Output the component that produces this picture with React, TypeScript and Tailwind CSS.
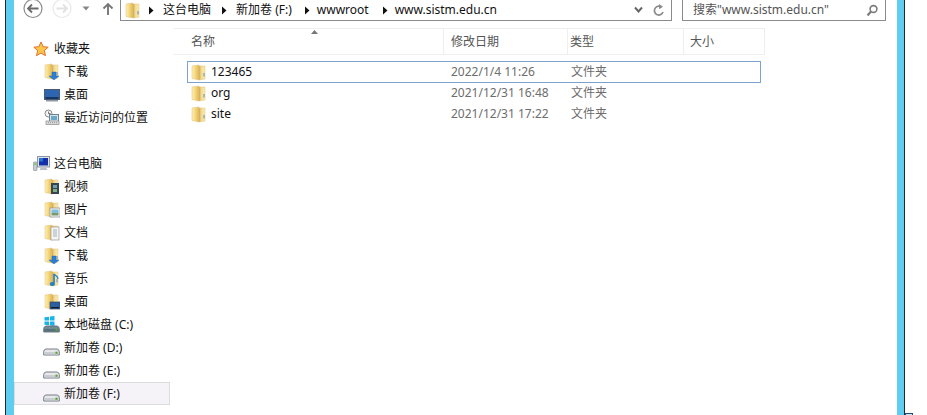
import React from "react";

function Folder({ overlay }: { overlay?: React.ReactNode }) {
  return (
    <svg width="16" height="17" viewBox="0 0 16 17" className="shrink-0">
      <defs>
        <linearGradient id="fg" x1="0" x2="1" y1="0" y2="0">
          <stop offset="0" stopColor="#fdf1b8" />
          <stop offset="0.5" stopColor="#f6d67c" />
          <stop offset="1" stopColor="#e0b552" />
        </linearGradient>
        <linearGradient id="fr" x1="0" x2="1" y1="0" y2="0">
          <stop offset="0" stopColor="#c9a24e" />
          <stop offset="0.35" stopColor="#f3d98e" />
          <stop offset="1" stopColor="#fbedb4" />
        </linearGradient>
      </defs>
      <path d="M1 2 L8 1 L8 16 L1 14.5 Z" fill="url(#fg)" stroke="#dcc07a" strokeWidth="0.5" />
      <path d="M8 2 L14 2 L14 15 L8 16 Z" fill="url(#fr)" stroke="#dcc07a" strokeWidth="0.5" />
      <rect x="12.4" y="9" width="1.2" height="3.5" fill="#7a9cc0" />
      {overlay}
    </svg>
  );
}

const ArrowDown = (
  <path d="M8 9 H12 V13 H15 L10 17 L5 13 H8 Z" fill="#2a7fd4" stroke="#1c5fa8" strokeWidth="0.4" />
);
const DeskOverlay = (
  <g>
    <rect x="6" y="9" width="10" height="7" fill="#2b5f9e" stroke="#33465e" strokeWidth="0.7" />
    <rect x="7" y="14" width="8" height="1.2" fill="#101a28" />
  </g>
);
const VideoOverlay = (
  <g>
    <rect x="7" y="5" width="8" height="11" fill="#36454f" />
    <rect x="9" y="7" width="4" height="3" fill="#6d9fb0" />
    <rect x="9" y="11" width="4" height="3" fill="#7fb08c" />
  </g>
);
const PicOverlay = (
  <g>
    <rect x="6" y="7" width="10" height="9" fill="#f3f3f3" stroke="#8c8c8c" strokeWidth="0.7" />
    <rect x="7.5" y="8.5" width="7" height="4" fill="#7fc0d8" />
    <rect x="7.5" y="12" width="7" height="2.5" fill="#7b9a6d" />
  </g>
);
const DocOverlay = (
  <g>
    <rect x="7" y="3" width="8" height="13" fill="#f5f5f5" stroke="#9c9c9c" strokeWidth="0.7" />
    <path d="M9 6 H13 M9 8 H13 M9 10 H13 M9 12 H13" stroke="#8ca0b4" strokeWidth="0.8" />
  </g>
);
const MusicOverlay = (
  <g>
    <path d="M10 4 V13" stroke="#1f7fc8" strokeWidth="1.6" />
    <path d="M10 4 C12 6 14 6 14 9" stroke="#1f7fc8" strokeWidth="1.2" fill="none" />
    <ellipse cx="8.4" cy="14" rx="2.6" ry="2" fill="#1f7fc8" />
  </g>
);

function Star() {
  return (
    <svg width="16" height="16" viewBox="0 0 16 16" className="shrink-0">
      <path
        d="M8 1 L10.1 5.7 L15.2 6.2 L11.3 9.6 L12.5 14.7 L8 12 L3.5 14.7 L4.7 9.6 L0.8 6.2 L5.9 5.7 Z"
        fill="#fbc44a"
        stroke="#e2712a"
        strokeWidth="1"
      />
    </svg>
  );
}

function Desktop() {
  return (
    <svg width="16" height="16" viewBox="0 0 16 16" className="shrink-0">
      <rect x="0.5" y="2.5" width="15" height="10" fill="#2d65b0" stroke="#4a5a70" />
      <rect x="1.5" y="10" width="13" height="2" fill="#16365f" />
      <rect x="2" y="13" width="12" height="1.5" fill="#8f9aa8" />
    </svg>
  );
}

function Recent() {
  return (
    <svg width="16" height="17" viewBox="0 0 16 17" className="shrink-0">
      <circle cx="4.5" cy="4.5" r="3.5" fill="#f4f4f4" stroke="#8a8a8a" />
      <path d="M4.5 2.5 V4.5 H6.5" stroke="#555" fill="none" strokeWidth="0.8" />
      <rect x="5.5" y="5.5" width="9" height="7" fill="#d6e6ee" stroke="#6f8090" />
      <rect x="7" y="7" width="6" height="4" fill="#6fa7c7" />
      <rect x="2" y="12" width="13" height="3.5" fill="#dcdcdc" stroke="#8a8a8a" strokeWidth="0.7" />
      <path d="M4 13.7 H13" stroke="#777" strokeWidth="0.7" strokeDasharray="1 1" />
    </svg>
  );
}

function Computer() {
  return (
    <svg width="17" height="16" viewBox="0 0 17 16" className="shrink-0">
      <rect x="0.5" y="6" width="3.5" height="8.5" rx="0.6" fill="#c8ccd0" stroke="#808890" strokeWidth="0.6" />
      <rect x="1.2" y="7" width="2" height="2" fill="#7fcf60" />
      <rect x="4.5" y="0.5" width="12" height="10.5" fill="#dfe3e8" stroke="#8a96a4" />
      <rect x="6" y="2" width="9" height="7.5" fill="#1631a8" />
      <rect x="6" y="2" width="4" height="3.5" fill="#2a74d8" />
      <path d="M8 11.5 H13 L14.5 14 H6.5 Z" fill="#b9bfc6" />
    </svg>
  );
}

function Drive({ win }: { win?: boolean }) {
  return (
    <svg width="17" height="17" viewBox="0 0 17 17" className="-ml-px shrink-0">
      {win && (
        <g fill="#17b4ea">
          <path d="M1.5 1.3 L6 0.7 V4.6 H1.5 Z" />
          <path d="M7 0.6 L11.5 0 V4.6 H7 Z" />
          <path d="M1.5 5.6 H6 V9.3 L1.5 8.8 Z" />
          <path d="M7 5.6 H11.5 V10 L7 9.4 Z" />
        </g>
      )}
      <path
        d="M0.7 16 V12.8 Q0.7 10.5 3 10 H14 Q16.3 10.5 16.3 12.8 V16 Z"
        fill={win ? "#6f8a94" : "#e6e8ea"}
        stroke="#67707a"
        strokeWidth="0.9"
      />
      <rect x="1.5" y="13" width="14" height="2.4" fill={win ? "#55707a" : "#c9ccd0"} />
      <rect x="12.5" y="12.6" width="2" height="2.2" fill="#58a82e" />
    </svg>
  );
}

function Item({
  icon,
  label,
  indent = true,
  selected,
}: {
  icon: React.ReactNode;
  label: string;
  indent?: boolean;
  selected?: boolean;
}) {
  return (
    <div
      className={
        "flex h-[23px] items-center border " +
        (selected ? "border-[#dcdcdc] bg-[#f6f3f8] " : "border-transparent ") +
        (indent ? "pl-[29px]" : "pl-[18px]")
      }
    >
      <span className={"flex shrink-0 items-center " + (indent ? "w-[20px]" : "w-[21px]")}>{icon}</span>
      <span className="whitespace-nowrap">{label}</span>
    </div>
  );
}

function Arrow() {
  return (
    <svg width="6" height="9" viewBox="0 0 6 9" className="shrink-0">
      <path d="M1 0.5 L5.5 4.5 L1 8.5 Z" fill="#111" />
    </svg>
  );
}

function Toolbar() {
  return (
    <div className="flex h-[21px] shrink-0 items-start">
      <div className="flex w-[106px] shrink-0 items-start">
        <svg width="106" height="19" viewBox="0 0 106 19" className="shrink-0">
          <circle cx="19" cy="8.5" r="9" fill="#fff" stroke="#8c8c8c" strokeWidth="1.2" />
          <path d="M24.5 8.5 H14 M18 4.5 L14 8.5 L18 12.5" stroke="#6b6b6b" strokeWidth="1.8" fill="none" />
          <circle cx="48" cy="8.5" r="9" fill="#fff" stroke="#e8e8e8" strokeWidth="1.2" />
          <path d="M42.5 8.5 H53 M49 4.5 L53 8.5 L49 12.5" stroke="#e2e2e2" strokeWidth="1.8" fill="none" />
          <path d="M68.5 6.5 H75.5 L72 10.5 Z" fill="#888" />
          <path d="M94 15 V4 M89.5 8.5 L94 4 L98.5 8.5" stroke="#777" strokeWidth="1.9" fill="none" />
        </svg>
      </div>
      <div className="flex h-[21px] w-[552px] shrink-0 items-center border-x border-b border-[#8b8b8b] text-[#111]">
        <span className="ml-[4px] flex">
          <Folder />
        </span>
        <span className="ml-[7px] mr-[9px]">
          <Arrow />
        </span>
        <span>这台电脑</span>
        <span className="ml-[10px] mr-[9px]">
          <Arrow />
        </span>
        <span>新加卷 (F:)</span>
        <span className="ml-[12px] mr-[7px]">
          <Arrow />
        </span>
        <span>wwwroot</span>
        <span className="ml-[13px] mr-[7px]">
          <Arrow />
        </span>
        <span>www.sistm.edu.cn</span>
        <span className="ml-auto flex items-center gap-[10px] pr-[6px]">
          <svg width="9" height="8" viewBox="0 0 9 8">
            <path d="M1 1.5 L4.5 5.5 L8 1.5" stroke="#666" strokeWidth="2" fill="none" />
          </svg>
          <svg width="12" height="13" viewBox="0 0 12 13">
            <path d="M10 8 A4.4 4.4 0 1 1 7.6 2.6" stroke="#8a8a8a" strokeWidth="1.7" fill="none" />
            <path d="M6 0 L10 2.8 L6.2 5.2 Z" fill="#8a8a8a" />
          </svg>
        </span>
      </div>
      <div className="ml-[10px] flex h-[21px] w-[204px] shrink-0 items-center justify-between border-x border-b border-[#8b8b8b] pl-[10px] pr-[7px] text-[#555]">
        <span>搜索"www.sistm.edu.cn"</span>
        <svg width="12" height="13" viewBox="0 0 12 13">
          <circle cx="7.5" cy="5" r="3.4" stroke="#7d7d7d" strokeWidth="1.6" fill="none" />
          <path d="M5 7.5 L1.5 11.5" stroke="#7d7d7d" strokeWidth="2.2" />
        </svg>
      </div>
    </div>
  );
}

function Sidebar() {
  return (
    <div className="w-[156px] shrink-0 pt-[16px] text-[#111]">
      <Item indent={false} icon={<Star />} label="收藏夹" />
      <Item icon={<Folder overlay={ArrowDown} />} label="下载" />
      <Item icon={<Desktop />} label="桌面" />
      <Item icon={<Recent />} label="最近访问的位置" />
      <div className="h-[23px]" />
      <Item indent={false} icon={<Computer />} label="这台电脑" />
      <Item icon={<Folder overlay={VideoOverlay} />} label="视频" />
      <Item icon={<Folder overlay={PicOverlay} />} label="图片" />
      <Item icon={<Folder overlay={DocOverlay} />} label="文档" />
      <Item icon={<Folder overlay={ArrowDown} />} label="下载" />
      <Item icon={<Folder overlay={MusicOverlay} />} label="音乐" />
      <Item icon={<Folder overlay={DeskOverlay} />} label="桌面" />
      <Item icon={<Drive win />} label="本地磁盘 (C:)" />
      <Item icon={<Drive />} label="新加卷 (D:)" />
      <Item icon={<Drive />} label="新加卷 (E:)" />
      <Item selected icon={<Drive />} label="新加卷 (F:)" />
    </div>
  );
}

function Row({
  name,
  date,
  focused,
}: {
  name: string;
  date: string;
  focused?: boolean;
}) {
  return (
    <div
      className={
        "-mb-px flex h-[22px] w-[574px] items-center border " +
        (focused ? "border-[#7da2ce]" : "border-transparent")
      }
    >
      <span className="flex w-[263px] shrink-0 items-center pl-[3px]">
        <span className="flex w-[20px] shrink-0">
          <Folder />
        </span>
        <span className="text-[#111]">{name}</span>
      </span>
      <span className="w-[120px] shrink-0 text-[#6d6d6d]">{date}</span>
      <span className="text-[#6d6d6d]">文件夹</span>
    </div>
  );
}

function FileList() {
  return (
    <div className="min-w-0 flex-1 pl-[4px] pt-[7px]">
      <div className="relative flex h-[27px] w-[591px] border-y border-[#eeeeee] text-[#555]">
        <svg width="7" height="4" viewBox="0 0 7 4" className="absolute left-[137px] top-[1px]">
          <path d="M0 4 L3.5 0 L7 4 Z" fill="#777" />
        </svg>
        <div className="flex w-[270px] items-center border-r border-[#eeeeee] pl-[17px]">名称</div>
        <div className="flex w-[124px] items-center border-r border-[#eeeeee] pl-[7px]">修改日期</div>
        <div className="flex w-[116px] items-center border-r border-[#eeeeee] pl-[2px]">类型</div>
        <div className="flex w-[81px] items-center border-r border-[#eeeeee] pl-[6px]">大小</div>
      </div>
      <div className="ml-[13px] pt-[6px]">
        <Row focused name="123465" date="2022/1/4 11:26" />
        <Row name="org" date="2021/12/31 16:48" />
        <Row name="site" date="2021/12/31 17:22" />
      </div>
    </div>
  );
}

export default function App() {
  return (
    <div
      className="flex h-[415px] w-[927px] overflow-hidden bg-white text-[12px] leading-none"
      style={{ fontFamily: '"Noto Sans", "Noto Sans CJK SC", sans-serif' }}
    >
      <div className="w-[5px] shrink-0" />
      <div className="w-[9px] shrink-0 border-l border-[#1d2b33] bg-[#5fcdf2]" />
      <div className="flex min-w-0 flex-1 flex-col">
        <Toolbar />
        <div className="flex min-h-0 flex-1">
          <Sidebar />
          <FileList />
        </div>
      </div>
      <div className="w-[8px] shrink-0 border-r border-[#1d2b33] bg-[#5fcdf2]" />
      <div className="flex w-[22px] shrink-0 items-end">
        <div className="h-[2px] w-[8px] border-x border-t border-[#1d4f78] bg-[#bfe6fa]" />
      </div>
    </div>
  );
}
